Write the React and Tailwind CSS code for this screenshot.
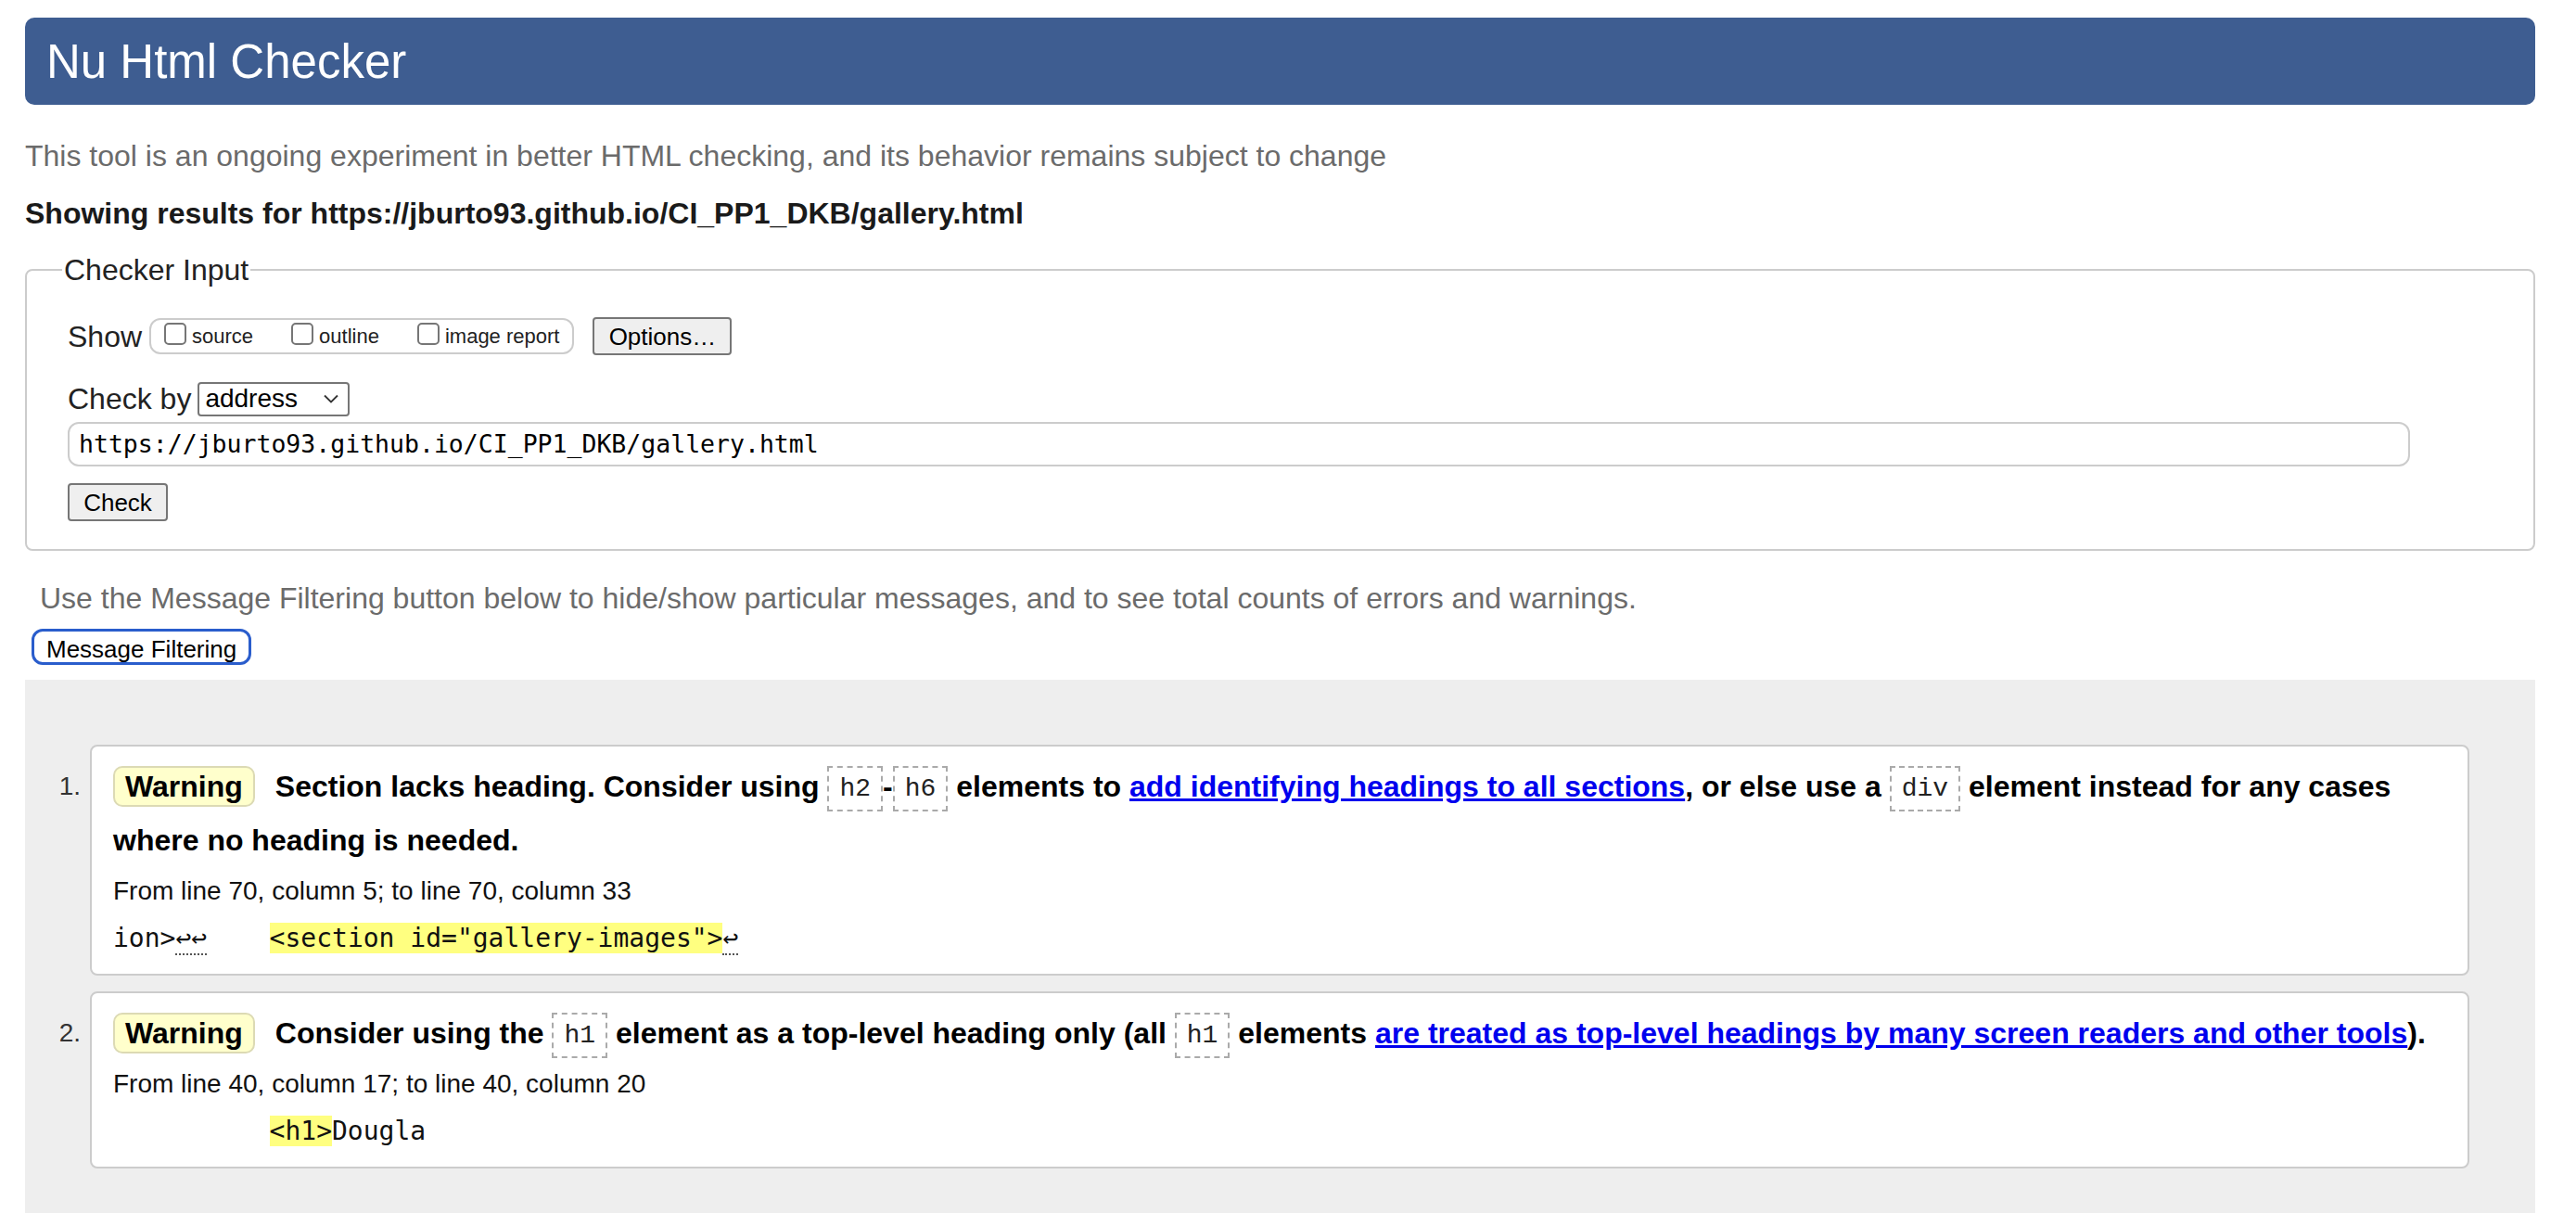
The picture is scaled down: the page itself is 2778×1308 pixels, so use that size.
import React from "react";

const Code = ({ children }) => (
  <code className="inline-block border-2 border-dashed border-[#aaa] px-[11px] align-middle font-['Liberation_Mono',monospace] text-[28px] font-normal leading-[45px] text-[#222]">
    {children}
  </code>
);

const Badge = () => (
  <span className="mr-[22px] inline-block rounded-[10px] border-2 border-[#dcdab4] bg-[#ffffcc] px-[11px] align-baseline leading-[40px]">
    Warning
  </span>
);

const Lf = ({ children }) => (
  <span className="border-b-2 border-dotted border-[#555]">{children}</span>
);

const Checkbox = ({ label }) => (
  <label className="flex items-center">
    <span className="mb-[6px] h-[24px] w-[24px] rounded-[5px] border-2 border-[#767676] bg-white" />
    <span className="ml-[6px] text-[22px] leading-[28px]">{label}</span>
  </label>
);

const Message = ({ num, children, from, extract }) => (
  <li className="flex">
    <div className="w-[70px] shrink-0 pr-[10px] pt-[16px] text-right text-[28px] leading-[58px] text-[#333]">
      {num}.
    </div>
    <div className="flex-1 rounded-[8px] border-2 border-[#ccc] bg-white pb-[18px] pl-[23px] pr-[20px] pt-[14px]">
      <p className="text-[32px] font-bold leading-[58px] text-black">{children}</p>
      <p className="mt-[8px] text-[28px] leading-[36px] text-[#111]">{from}</p>
      <p className="mt-[13px] whitespace-pre font-['DejaVu_Sans_Mono',monospace] text-[28px] leading-[40px] text-[#111]">
        {extract}
      </p>
    </div>
  </li>
);

export default function App() {
  return (
    <div className="min-h-screen bg-white pl-[27px] pr-[44px] pt-[19px] font-['Liberation_Sans',Arial,sans-serif] text-[#222]">
      <header className="flex h-[94px] items-center rounded-[10px] bg-[#3e5d91] pl-[23px]">
        <h1 className="text-[51px] font-normal leading-none text-white">Nu Html Checker</h1>
      </header>

      <p className="mt-[35px] text-[32px] leading-[40px] text-[#6b6b6b]">
        This tool is an ongoing experiment in better HTML checking, and its behavior remains subject to change
      </p>
      <p className="mt-[22px] text-[32px] font-bold leading-[40px] text-[#1a1a1a]">
        Showing results for https://jburto93.github.io/CI_PP1_DKB/gallery.html
      </p>

      <fieldset className="mt-[21px] rounded-[8px] border-2 border-[#ccc] pb-[30px] pl-[44px] pr-[20px]">
        <legend className="-ml-[6px] px-[2px] text-[32px] leading-[40px] text-[#222]">Checker Input</legend>

        <div className="mt-[31px] flex items-center">
          <span className="text-[32px] leading-[40px]">Show</span>
          <div className="ml-[8px] flex h-[39px] items-center gap-[41px] rounded-[12px] border-2 border-[#ccc] pl-[14px] pr-[14px]">
            <Checkbox label="source" />
            <Checkbox label="outline" />
            <Checkbox label="image report" />
          </div>
          <button className="ml-[20px] h-[41px] w-[150px] rounded-[4px] border-2 border-[#767676] bg-[#efefef] text-[26px] text-black">
            Options…
          </button>
        </div>

        <div className="mt-[27px] flex items-center">
          <span className="text-[32px] leading-[40px]">Check by</span>
          <div className="ml-[7px] flex h-[37px] w-[164px] items-center justify-between rounded-[4px] border-2 border-[#767676] bg-white pl-[6px] pr-[10px]">
            <span className="text-[28px] leading-none text-black">address</span>
            <svg width="16" height="10" viewBox="0 0 16 10" fill="none">
              <path d="M1 1.5L8 8.5L15 1.5" stroke="#333" strokeWidth="1.8" />
            </svg>
          </div>
        </div>

        <div className="mt-[5px] flex h-[48px] w-[2526px] items-center rounded-[12px] border-2 border-[#ccc] px-[10px] font-['DejaVu_Sans_Mono',monospace] text-[26.5px] text-black">
          https://jburto93.github.io/CI_PP1_DKB/gallery.html
        </div>

        <button className="mt-[18px] h-[41px] w-[108px] rounded-[4px] border-2 border-[#767676] bg-[#efefef] text-[26px] text-black">
          Check
        </button>
      </fieldset>

      <p className="mt-[31px] pl-[16px] text-[32px] leading-[40px] text-[#6b6b6b]">
        Use the Message Filtering button below to hide/show particular messages, and to see total counts of errors and warnings.
      </p>
      <button className="ml-[7px] mt-[13px] h-[39px] rounded-[12px] border-[3px] border-[#2a5dcc] bg-white px-[13px] text-[26px] text-black">
        Message Filtering
      </button>

      <div className="mt-[16px] bg-[#eeeeee] pb-[70px] pr-[71px] pt-[70px]">
        <ol className="flex flex-col gap-[17px]">
          <Message
            num={1}
            from="From line 70, column 5; to line 70, column 33"
            extract={
              <>
                ion&gt;<Lf>↩↩</Lf>{"    "}
                <span className="bg-[#ffff80]">&lt;section id="gallery-images"&gt;</span>
                <Lf>↩</Lf>
              </>
            }
          >
            <Badge />
            <span>Section lacks heading. Consider using </span>
            <Code>h2</Code>-<Code>h6</Code>
            <span> elements to </span>
            <a href="#" className="text-[#0000ee] underline">
              add identifying headings to all sections
            </a>
            <span>, or else use a </span>
            <Code>div</Code>
            <span> element instead for any cases</span>
            <br />
            <span>where no heading is needed.</span>
          </Message>

          <Message
            num={2}
            from="From line 40, column 17; to line 40, column 20"
            extract={
              <>
                {"          "}
                <span className="bg-[#ffff80]">&lt;h1&gt;</span>Dougla
              </>
            }
          >
            <Badge />
            <span>Consider using the </span>
            <Code>h1</Code>
            <span> element as a top-level heading only (all </span>
            <Code>h1</Code>
            <span> elements </span>
            <a href="#" className="text-[#0000ee] underline">
              are treated as top-level headings by many screen readers and other tools
            </a>
            <span>).</span>
          </Message>
        </ol>
      </div>
    </div>
  );
}
